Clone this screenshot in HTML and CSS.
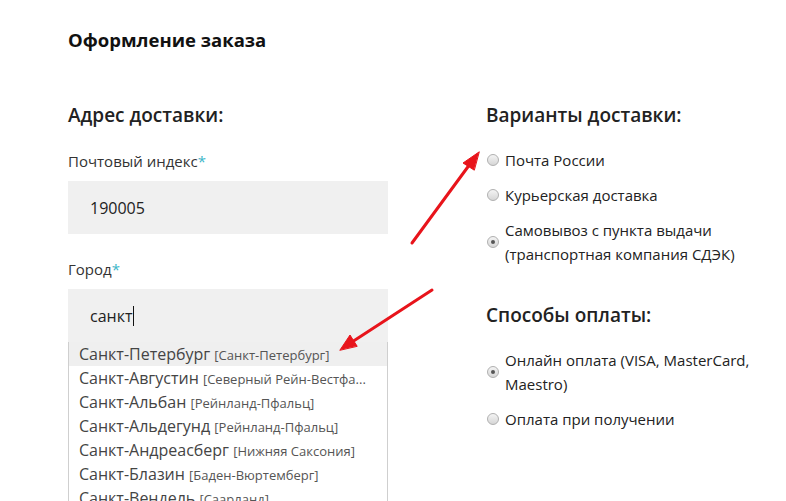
FILE: index.html
```html
<!DOCTYPE html>
<html lang="ru">
<head>
    <meta charset="UTF-8">
    <title>Оформление заказа</title>
    <link rel="stylesheet" href="styles.css">
</head>
<body>
    <div class="page">
        <h1 class="title">Оформление заказа</h1>
        <div class="columns">
            <div class="column column--left">
                <h2 class="heading">Адрес доставки:</h2>
                <div class="field">
                    <label class="field__label">Почтовый индекс<span class="req">*</span></label>
                    <div class="field__input">190005</div>
                </div>
                <div class="field">
                    <label class="field__label">Город<span class="req">*</span></label>
                    <div class="field__input">санкт<span class="caret"></span></div>
                    <ul class="suggest">
                        <li class="suggest__item suggest__item--active">Санкт-Петербург <small>[Санкт-Петербург]</small></li>
                        <li class="suggest__item">Санкт-Августин <small>[Северный Рейн-Вестфа...</small></li>
                        <li class="suggest__item">Санкт-Альбан <small>[Рейнланд-Пфальц]</small></li>
                        <li class="suggest__item">Санкт-Альдегунд <small>[Рейнланд-Пфальц]</small></li>
                        <li class="suggest__item">Санкт-Андреасберг <small>[Нижняя Саксония]</small></li>
                        <li class="suggest__item">Санкт-Блазин <small>[Баден-Вюртемберг]</small></li>
                        <li class="suggest__item">Санкт-Вендель <small>[Саарланд]</small></li>
                    </ul>
                </div>
            </div>
            <div class="column column--right">
                <h2 class="heading">Варианты доставки:</h2>
                <div class="options">
                    <label class="option"><span class="radio"></span><span>Почта России</span></label>
                    <label class="option"><span class="radio"></span><span>Курьерская доставка</span></label>
                    <label class="option"><span class="radio radio--checked"></span><span>Самовывоз с пункта выдачи<br>(транспортная компания СДЭК)</span></label>
                </div>
                <h2 class="heading heading--pay">Способы оплаты:</h2>
                <div class="options">
                    <label class="option"><span class="radio radio--checked"></span><span>Онлайн оплата (VISA, MasterCard,<br>Maestro)</span></label>
                    <label class="option"><span class="radio"></span><span>Оплата при получении</span></label>
                </div>
            </div>
        </div>
    </div>

    <svg class="arrows" width="786" height="501" viewBox="0 0 786 501">
        <g stroke="#e8141b" stroke-width="3" fill="#e8141b" stroke-linecap="round">
            <line x1="412" y1="243" x2="470" y2="164"/>
            <polygon points="479,152 463,163 474,170" stroke-width="1"/>
            <line x1="432" y1="290" x2="352" y2="342"/>
            <polygon points="340,350 350,335 357,346" stroke-width="1"/>
        </g>
    </svg>
</body>
</html>
```

FILE: styles.css
```css
body {
    margin: 0;
    background: #fff;
    font-family: 'Open Sans', 'Noto Sans', sans-serif;
    color: #222;
    overflow: hidden;
}

.page {
    padding: 28px 0 0 68px;
}

.title {
    margin: 0;
    font-size: 18.5px;
    line-height: 24px;
    font-weight: 700;
    color: #111;
}

.columns {
    display: grid;
    grid-template-columns: 320px 300px;
    column-gap: 98px;
    margin-top: 51px;
}

.heading {
    margin: 0;
    font-size: 19px;
    line-height: 24px;
    font-weight: 600;
    color: #222;
}

.field {
    margin-top: 24px;
}

.field + .field {
    margin-top: 25px;
}

.field__label {
    display: block;
    font-size: 15px;
    line-height: 20px;
    color: #333;
}

.req {
    color: #3cb6c8;
}

.field__input {
    margin-top: 10px;
    height: 53px;
    padding: 0 22px;
    display: flex;
    align-items: center;
    background: #f0f0f0;
    font-size: 16px;
    color: #222;
}

.caret {
    display: inline-block;
    width: 1px;
    height: 20px;
    background: #111;
    margin-left: 1px;
}

.suggest {
    list-style: none;
    margin: 0;
    padding: 0;
    border: 1px solid #cfcfcf;
    border-top: none;
}

.suggest__item {
    height: 24px;
    line-height: 24px;
    padding: 0 10px;
    font-size: 16px;
    color: #444;
    white-space: nowrap;
}

.suggest__item small {
    font-size: 13px;
    color: #555;
}

.suggest__item--active {
    background: #efefef;
}

.options {
    margin-top: 21px;
    display: flex;
    flex-direction: column;
    gap: 11px;
}

.option {
    display: flex;
    align-items: center;
    font-size: 15px;
    line-height: 24px;
    color: #222;
}

.radio {
    flex: none;
    width: 12px;
    height: 12px;
    margin: 0 6px 0 1px;
    border: 1px solid #b0b0b0;
    border-radius: 50%;
    background: linear-gradient(#f4f4f4, #d6d6d6);
    box-sizing: border-box;
    display: flex;
    align-items: center;
    justify-content: center;
}

.radio--checked::after {
    content: '';
    width: 4px;
    height: 4px;
    border-radius: 50%;
    background: #555;
}

.heading--pay {
    margin-top: 37px;
}

.arrows {
    position: absolute;
    left: 0;
    top: 0;
    pointer-events: none;
}
```
